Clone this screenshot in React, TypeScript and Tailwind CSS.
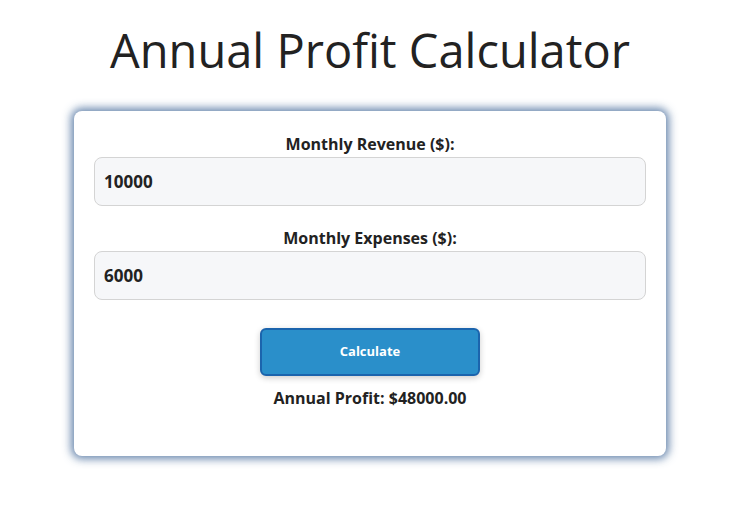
import { useState } from "react";

export default function App() {
  const [revenue, setRevenue] = useState("10000");
  const [expenses, setExpenses] = useState("6000");
  const [profit, setProfit] = useState("48000.00");

  const calculate = () => {
    const r = parseFloat(revenue) || 0;
    const e = parseFloat(expenses) || 0;
    setProfit(((r - e) * 12).toFixed(2));
  };

  return (
    <div className="min-h-screen bg-white pr-1 font-['Open_Sans',sans-serif] text-[#222]">
      <h1 className="pt-[22px] text-center text-[47px] font-normal leading-[56px] text-[#222]">
        Annual Profit Calculator
      </h1>
      <div className="mx-auto mt-[33px] w-[592px] rounded-lg bg-white px-5 pt-[21px] pb-[46px] shadow-[0_0_8px_3px_rgba(80,115,160,0.85)]">
        <label className="block text-center text-[16px] font-bold leading-[24px]">
          Monthly Revenue ($):
        </label>
        <input
          type="number"
          value={revenue}
          onChange={(e) => setRevenue(e.target.value)}
          className="mt-[1px] block h-[49px] w-full rounded-lg border border-[#d4d4d4] bg-[#f6f7f9] px-[9px] text-[17px] font-bold outline-none"
        />
        <label className="mt-[20px] block text-center text-[16px] font-bold leading-[24px]">
          Monthly Expenses ($):
        </label>
        <input
          type="number"
          value={expenses}
          onChange={(e) => setExpenses(e.target.value)}
          className="mt-[1px] block h-[49px] w-full rounded-lg border border-[#d4d4d4] bg-[#f6f7f9] px-[9px] text-[17px] font-bold outline-none"
        />
        <button
          type="button"
          onClick={calculate}
          className="mx-auto mt-[28px] block h-[48px] w-[220px] rounded-md border-2 border-[#1b64ad] bg-[#2a8fca] text-[13px] font-bold text-white shadow-[0_2px_6px_rgba(0,0,0,0.2)]"
        >
          Calculate
        </button>
        <p className="mt-[10px] text-center text-[16px] font-bold leading-[24px]">
          Annual Profit: ${profit}
        </p>
      </div>
    </div>
  );
}
